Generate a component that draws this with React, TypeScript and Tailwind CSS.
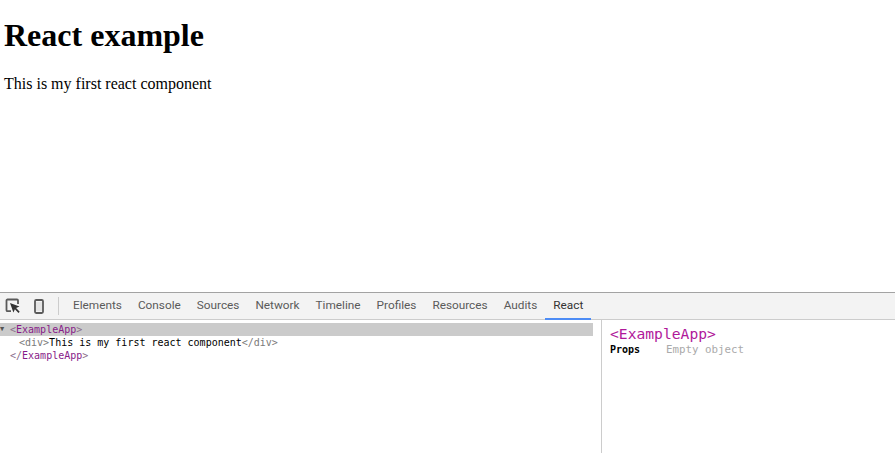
import React from 'react';

const tabs = ['Elements', 'Console', 'Sources', 'Network', 'Timeline', 'Profiles', 'Resources', 'Audits', 'React'];

const InspectIcon = () => (
    <svg width="16" height="16" viewBox="0 0 16 16" className="block">
        <path d="M6 13.2H2.5a1 1 0 0 1-1-1V2.5a1 1 0 0 1 1-1H12a1 1 0 0 1 1 1V6" fill="none" stroke="#5a5a5a" strokeWidth="1.8" />
        <path d="M5 5l9.5 3.5-3.4 1.5 3.6 3.7-1.2 1.2-3.6-3.7-1.5 3.4z" fill="#333" />
    </svg>
);

const DeviceIcon = () => (
    <svg width="10" height="15" viewBox="0 0 10 15" className="block">
        <rect x="1" y="1" width="8" height="13" rx="1.2" fill="none" stroke="#5a5a5a" strokeWidth="1.8" />
        <rect x="2" y="3" width="6" height="9" fill="#e4e4e4" />
    </svg>
);

export default function App() {
    return (
        <div className="h-[453px] w-[895px] overflow-hidden bg-white flex flex-col text-black">
            {/* page */}
            <div className="h-[292px] shrink-0 pl-[4px] pt-[17px] font-['Liberation_Serif',serif]">
                <h1 className="text-[32px] leading-[37px] font-bold">React example</h1>
                <p className="mt-[21px] text-[16px] leading-[18px]">This is my first react component</p>
            </div>

            {/* devtools toolbar */}
            <div className="h-[28px] shrink-0 flex items-stretch bg-[#f3f3f3] border-t border-t-[#a3a3a3] border-b border-b-[#cccccc]">
                <div className="flex items-center pl-[5px]">
                    <InspectIcon />
                    <div className="ml-[13px]"><DeviceIcon /></div>
                    <div className="ml-[14px] w-px h-[18px] bg-[#cccccc]" />
                </div>
                <div className="flex ml-[6px] font-['Roboto',sans-serif] text-[11.8px] text-[#5a5a5a]">
                    {tabs.map((t) => (
                        <div
                            key={t}
                            className={`px-[8px] flex items-center border-b-2 -mb-px ${t === 'React' ? 'border-[#4d8cf5] text-[#333333]' : 'border-transparent'}`}
                        >
                            {t}
                        </div>
                    ))}
                </div>
            </div>

            {/* panes */}
            <div className="flex-1 flex min-h-0 font-['DejaVu_Sans_Mono',monospace]">
                <div className="w-[602px] shrink-0 border-r border-[#cccccc] pt-[3px] pr-[8px] text-[10px] leading-[13px]">
                    <div className="bg-[#cbcbcb] h-[13px] flex items-center text-[#881a88]">
                        <span className="w-[10px] text-[7px] text-[#555555] leading-none">▼</span>
                        <span><span className="text-[#8a6d8a]">&lt;</span>ExampleApp<span className="text-[#8a6d8a]">&gt;</span></span>
                    </div>
                    <div className="pl-[19px] text-[#7a7a7a]">
                        &lt;div&gt;<span className="text-black">This is my first react component</span>&lt;/div&gt;
                    </div>
                    <div className="pl-[10px] text-[#881a88]">
                        <span className="text-[#8a6d8a]">&lt;/</span>ExampleApp<span className="text-[#8a6d8a]">&gt;</span>
                    </div>
                </div>
                <div className="flex-1 pl-[8px] pt-[5px]">
                    <div className="text-[14.67px] leading-[17px] text-[#b0189a]">&lt;ExampleApp&gt;</div>
                    <div className="flex items-center text-[10px] leading-[13px] mt-[1px]">
                        <span className="w-[56px] font-bold">Props</span>
                        <span className="text-[10.8px] text-[#aaaaaa]">Empty object</span>
                    </div>
                </div>
            </div>
        </div>
    );
}
